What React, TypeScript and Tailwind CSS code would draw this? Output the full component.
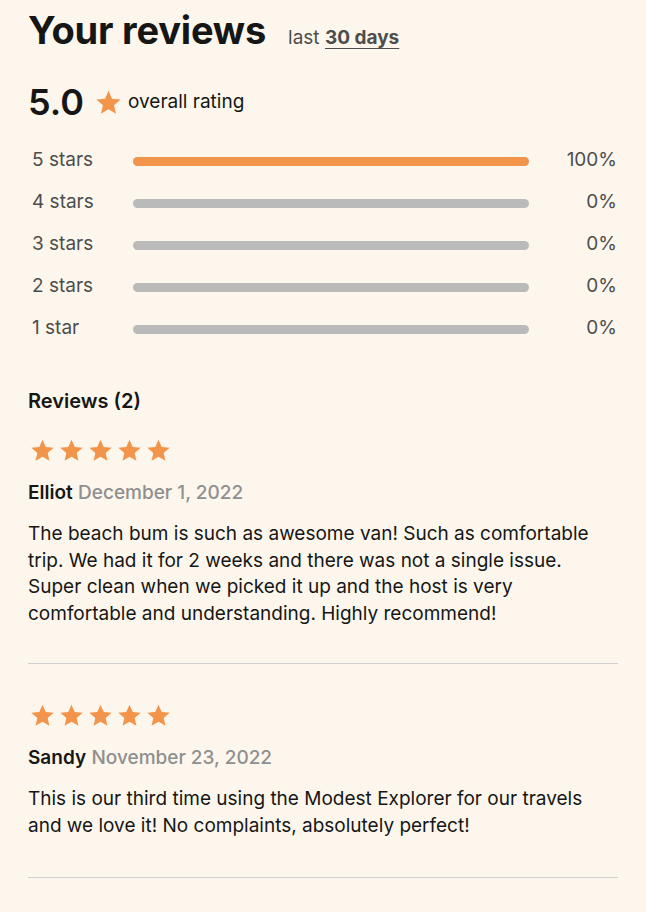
import React from "react";

function Star({ size = 24 }: { size?: number }) {
  return (
    <svg width={size} height={size} viewBox="0 0 24 24" aria-hidden="true">
      <path
        d="M12 1.6l3.09 7.05 7.66.68-5.8 5.06 1.72 7.5L12 17.9l-6.67 3.99 1.72-7.5-5.8-5.06 7.66-.68z"
        fill="#f2954b"
      />
    </svg>
  );
}

const rows = [
  { label: "5 stars", pct: 100 },
  { label: "4 stars", pct: 0 },
  { label: "3 stars", pct: 0 },
  { label: "2 stars", pct: 0 },
  { label: "1 star", pct: 0 },
];

const reviews = [
  {
    name: "Elliot",
    date: "December 1, 2022",
    text: "The beach bum is such as awesome van! Such as comfortable trip. We had it for 2 weeks and there was not a single issue. Super clean when we picked it up and the host is very comfortable and understanding. Highly recommend!",
  },
  {
    name: "Sandy",
    date: "November 23, 2022",
    text: "This is our third time using the Modest Explorer for our travels and we love it! No complaints, absolutely perfect!",
  },
];

export default function App() {
  return (
    <div
      className="min-h-[912px] w-full bg-[#fdf6ec] px-[28px] pt-[6px] text-[#161616]"
      style={{ fontFamily: "Inter, 'Noto Sans', sans-serif" }}
    >
      <div className="flex items-baseline gap-[22px]">
        <h1 className="text-[38px] font-bold leading-[48px] tracking-[-0.005em]">Your reviews</h1>
        <p className="text-[19px] text-[#4d4d4d]">
          last <span className="font-bold underline underline-offset-[4px]">30 days</span>
        </p>
      </div>

      <div className="mt-[28px] flex items-center">
        <span className="text-[36px] font-semibold leading-[40px]">5.0</span>
        <span className="ml-[11px] mr-[6px]">
          <Star size={27} />
        </span>
        <span className="text-[19px]">overall rating</span>
      </div>

      <div className="mt-[17px] flex flex-col">
        {rows.map((r) => (
          <div key={r.label} className="flex h-[42px] items-center pl-[4px]">
            <span className="w-[101px] text-[19px] text-[#4d4d4d]">{r.label}</span>
            <div className="mt-[3px] h-[9px] w-[396px] overflow-hidden rounded-full bg-[#bababa]">
              <div className="h-full rounded-full bg-[#f2954b]" style={{ width: `${r.pct}%` }} />
            </div>
            <span className="flex-1 pr-[1px] text-right text-[19px] text-[#4d4d4d]">{r.pct}%</span>
          </div>
        ))}
      </div>

      <h2 className="mt-[38px] text-[20px] font-semibold leading-[28px]">Reviews ({reviews.length})</h2>

      {reviews.map((rv, idx) => (
        <div
          key={rv.name}
          className={
            idx === 0
              ? "border-b border-[#cfcfcf] pb-[36px] pt-[23px]"
              : "border-b border-[#cfcfcf] pb-[38px] pt-[39px]"
          }
        >
          <div className="flex gap-[4px] pl-[2px]">
            {[0, 1, 2, 3, 4].map((i) => (
              <Star key={i} size={25} />
            ))}
          </div>
          <p className="mt-[18px] text-[19px] leading-[24px]">
            <span className="font-semibold">{rv.name}</span>{" "}
            <span className="font-medium text-[#8f8f8f]">{rv.date}</span>
          </p>
          <p className="mt-[16px] text-[19px] leading-[26.5px]">{rv.text}</p>
        </div>
      ))}
    </div>
  );
}
